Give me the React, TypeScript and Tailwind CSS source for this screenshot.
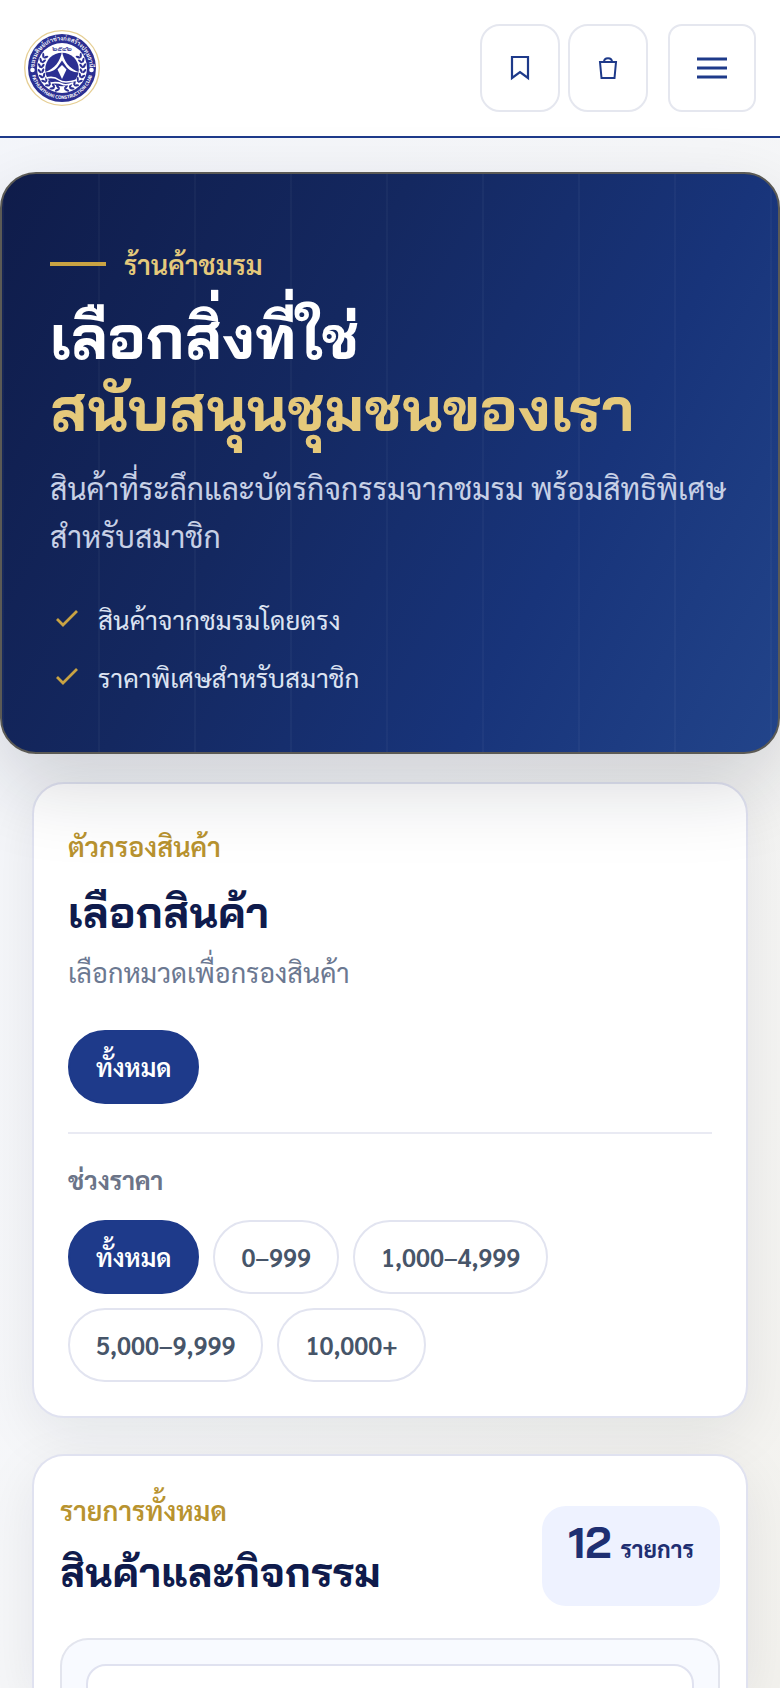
import type { ReactNode } from 'react';

const highlights = ['สินค้าจากชมรมโดยตรง', 'ราคาพิเศษสำหรับสมาชิก'];
const categories = ['ทั้งหมด'];
const priceRanges = ['ทั้งหมด', '0–999', '1,000–4,999', '5,000–9,999', '10,000+'];

function ClubLogo() {
  const leaves = Array.from({ length: 9 }, (_, i) => 12 + i * 14);
  return (
    <svg viewBox="0 0 76 76" className="size-19" role="img" aria-label="Pathumthani Construction Club">
      <defs>
        <path id="logo-top" d="M10.500 38a27.500 27.500 0 0 1 55 0" />
        <path id="logo-bottom" d="M7 38a31 31 0 0 0 62 0" />
      </defs>
      <circle cx="38" cy="38" r="37.300" fill="#fff" stroke="#e6cf95" strokeWidth="1.300" />
      <circle cx="38" cy="38" r="34" fill="#2b2f92" />
      <circle cx="38" cy="38" r="25" fill="#fff" />
      <g fill="#2b2f92">
        {leaves.map((a) => (
          <g key={a}>
            <g transform={`rotate(${180 - a} 38 38)`}>
              <ellipse cx="38" cy="15.400" rx="2.600" ry="1.100" transform="rotate(35 38 15.400)" />
              <ellipse cx="38" cy="18.600" rx="2.600" ry="1.100" transform="rotate(-35 38 18.600)" />
            </g>
            <g transform={`rotate(${180 + a} 38 38)`}>
              <ellipse cx="38" cy="15.400" rx="2.600" ry="1.100" transform="rotate(-35 38 15.400)" />
              <ellipse cx="38" cy="18.600" rx="2.600" ry="1.100" transform="rotate(35 38 18.600)" />
            </g>
          </g>
        ))}
      </g>
      <circle cx="38" cy="39.500" r="16.800" fill="#2b2f92" />
      <path d="M38 21c1.500 10 7 18 18 21.500c-8 0-12-3-14.500-7L38 30.500l-3.500 5c-2.500 4-6.500 7-14.500 7C31 39 36.500 31 38 21z" fill="#fff" />
      <path d="M38 35l4.500 4.500L38 49l-4.500-9.500z" fill="#fff" />
      <path d="M22 48q8-2 13 2t18 0M27 53q7-1 11 1t11-1" fill="none" stroke="#fff" strokeWidth="1.600" />
      <text fontSize="7" fontWeight="700" textAnchor="middle" x="38" y="21" fill="#2b2f92">๒๕๔๒</text>
      <circle cx="8.500" cy="40" r="2.300" fill="#fff" />
      <circle cx="67.500" cy="40" r="2.300" fill="#fff" />
      <text fontSize="6" fontWeight="600" fill="#fff" textAnchor="middle">
        <textPath href="#logo-top" startOffset="50%">ชมรมศิษย์เก่าช่างก่อสร้างปทุมธานี</textPath>
      </text>
      <text fontSize="4.800" fontWeight="700" fill="#fff" textAnchor="middle">
        <textPath href="#logo-bottom" startOffset="50%">PATHUMTHANI CONSTRUCTION CLUB</textPath>
      </text>
    </svg>
  );
}

function Chip({ children, active = false }: { children: ReactNode; active?: boolean }) {
  return (
    <button
      type="button"
      aria-pressed={active}
      className={
        'h-[74px] rounded-full border-2 px-[26px] text-[25px] font-semibold ' +
        (active ? 'border-[#1e3a8a] bg-[#1e3a8a] text-white' : 'border-[#e2e4f0] bg-white text-[#475569]')
      }
    >
      {children}
    </button>
  );
}

function Eyebrow({ children }: { children: ReactNode }) {
  return <p className="text-[27px] leading-10 font-semibold text-[#b8932f]">{children}</p>;
}

export default function App() {
  return (
    <div className="min-h-screen bg-linear-to-br from-[#f4f6fb] via-[#f6f7f9] to-[#f3f2ee] font-['Sarabun','Noto_Sans_Thai_Looped','Noto_Sans',sans-serif] text-[#0f1b4c]">
      <header className="flex items-center justify-between border-b-2 border-[#1e3a8a] bg-white px-6 py-6">
        <a href="#home">
          <ClubLogo />
        </a>
        <nav className="flex items-center gap-2" aria-label="เมนูหลัก">
          <button type="button" aria-label="รายการที่บันทึก" className="grid h-22 w-20 place-items-center rounded-[20px] border-2 border-[#e5e7ef]">
            <svg viewBox="0 0 24 26" className="h-[26px] w-6" fill="none" stroke="#1e3a8a" strokeWidth="2.200">
              <path d="M4 2h16v21l-8-6l-8 6z" />
            </svg>
          </button>
          <button type="button" aria-label="ตะกร้าสินค้า" className="grid h-22 w-20 place-items-center rounded-[20px] border-2 border-[#e5e7ef]">
            <svg viewBox="0 0 24 26" className="h-[26px] w-6" fill="none" stroke="#1e3a8a" strokeWidth="2">
              <path d="M4 7h16l-1.500 16h-13zM8 7c0-5 8-5 8 0" />
            </svg>
          </button>
          <button type="button" aria-label="เปิดเมนู" className="ml-3 grid size-22 place-items-center rounded-[14px] border-2 border-[#e5e7ef]">
            <svg viewBox="0 0 30 24" className="h-6 w-[30px]" stroke="#1e3a8a" strokeWidth="3.200">
              <path d="M0 3h30M0 12h30M0 21h30" />
            </svg>
          </button>
        </nav>
      </header>

      <main className="pt-[34px]">
        <section className="relative z-10 overflow-hidden rounded-[36px] border-2 border-[#5b5a55] bg-linear-[118deg,#0f1c4a_0%,#142860_38%,#18347a_70%,#22448a_100%] shadow-[0_32px_80px_rgba(15,23,42,0.17)]">
          <div className="bg-[linear-gradient(90deg,rgba(255,255,255,0.03)_2px,transparent_2px)] bg-size-[96px_100%] px-12 pt-[70px] pb-[54px]">
            <div className="flex items-center gap-[18px]">
              <span className="h-1 w-14 bg-[#c9a343]" />
              <p className="text-[27px] leading-10 font-semibold text-[#e5c97b]">ร้านค้าชมรม</p>
            </div>
            <h1 className="mt-4 font-['Bai_Jamjuree','Noto_Sans_Thai_Looped',sans-serif] text-[61px] leading-[72px] font-bold text-white">
              เลือกสิ่งที่ใช่
              <span className="block text-[#e5c97b]">สนับสนุนชุมชนของเรา</span>
            </h1>
            <p className="mt-5 text-[30px] leading-12 text-[#c7d0e6]">
              สินค้าที่ระลึกและบัตรกิจกรรมจากชมรม พร้อมสิทธิพิเศษสำหรับสมาชิก
            </p>
            <ul className="mt-[38px] flex flex-col gap-4 text-[26px] leading-[42px] text-[#dce3f2]">
              {highlights.map((item) => (
                <li key={item} className="flex items-center gap-4">
                  <svg viewBox="0 0 32 32" className="size-8" fill="none" stroke="#c9a343" strokeWidth="2.800">
                    <path d="M7 16l6 6L27 8" />
                  </svg>
                  {item}
                </li>
              ))}
            </ul>
          </div>
        </section>

        <section className="mx-8 mt-7 rounded-[32px] border-2 border-[#e0e2f0] bg-white px-[34px] pt-[42px] pb-[34px] shadow-[0_16px_56px_rgba(15,23,42,0.08)]">
          <Eyebrow>ตัวกรองสินค้า</Eyebrow>
          <h2 className="mt-[14px] font-['Bai_Jamjuree','Noto_Sans_Thai_Looped',sans-serif] text-[43px] leading-16 font-bold">เลือกสินค้า</h2>
          <p className="mt-1 text-[27px] leading-12 text-[#6b7891]">เลือกหมวดเพื่อกรองสินค้า</p>
          <div className="mt-[34px] flex flex-wrap gap-[14px]">
            {categories.map((label) => (
              <Chip key={label} active>
                {label}
              </Chip>
            ))}
          </div>
          <hr className="mt-7 border-t-2 border-[#e9eaf3]" />
          <h3 className="mt-[26px] text-[25px] leading-10 font-bold text-[#6b7488]">ช่วงราคา</h3>
          <div className="mt-5 flex flex-wrap gap-[14px]">
            {priceRanges.map((label, i) => (
              <Chip key={label} active={i === 0}>
                {label}
              </Chip>
            ))}
          </div>
        </section>

        <section className="mx-8 mt-9 rounded-t-[32px] border-2 border-b-0 border-[#e0e2f0] bg-white px-[26px] pt-8 shadow-[0_16px_56px_rgba(15,23,42,0.08)]">
          <div className="flex items-center justify-between">
            <div>
              <Eyebrow>รายการทั้งหมด</Eyebrow>
              <h2 className="mt-[10px] font-['Bai_Jamjuree','Noto_Sans_Thai_Looped',sans-serif] text-[41px] leading-16 font-bold">สินค้าและกิจกรรม</h2>
            </div>
            <p className="mt-[18px] h-25 rounded-3xl bg-[#eef2ff] px-[26px] pt-2 text-[23px] leading-14 font-bold text-[#1e2f72]">
              <strong className="mr-1 font-['Bai_Jamjuree',sans-serif] text-[44px]">12</strong>{' '}
              รายการ
            </p>
          </div>
          <div className="mt-8 h-[50px] overflow-hidden rounded-t-[28px] border-2 border-b-0 border-[#e3e5ee] bg-[#f8faff] px-6 pt-6">
            <input
              type="search"
              aria-label="ค้นหาสินค้า"
              className="block h-20 w-full rounded-[20px] border-2 border-[#e0e2f0] bg-white px-6 text-2xl outline-none"
            />
          </div>
        </section>
      </main>
    </div>
  );
}
